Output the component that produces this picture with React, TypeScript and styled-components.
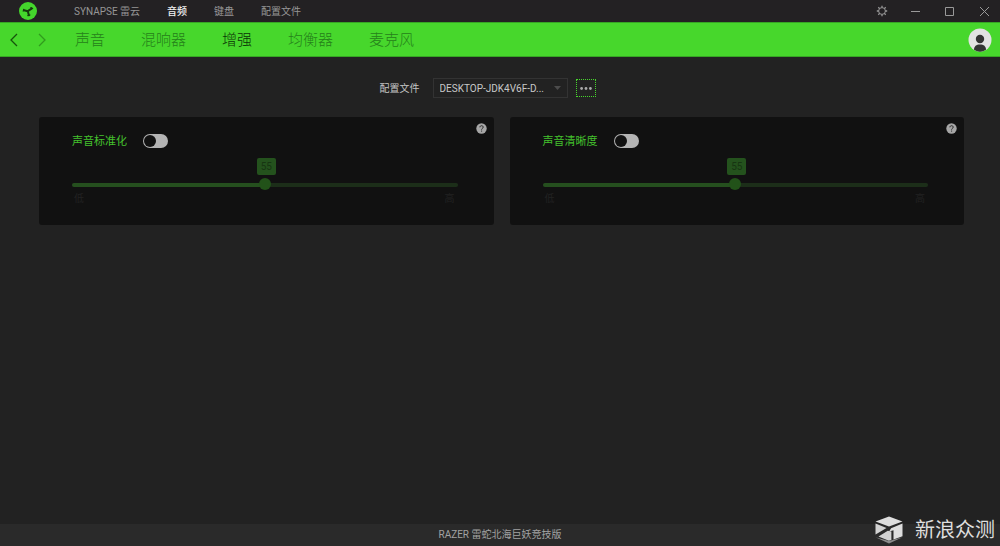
import React, { useState } from 'react';
import styled, { createGlobalStyle } from 'styled-components';

const Global = createGlobalStyle`
  * { box-sizing: border-box; }
  body {
    margin: 0;
    background: #222222;
    color: #b8b8b8;
    font-family: Roboto, "Noto Sans CJK SC", sans-serif;
    font-size: 10px;
    line-height: 16px;
  }
  button, select, input { font: inherit; color: inherit; margin: 0; }
  button { padding: 0; border: 0; background: none; cursor: pointer; }
  svg { display: block; }
`;

const Page = styled.div`
  min-height: 100vh;
  display: flex;
  flex-direction: column;
`;

const TitleBar = styled.header`
  display: flex;
  align-items: center;
  height: 22px;
  padding: 0 10px 0 19px;
  background: #232123;
`;

const Brand = styled.div`
  width: 55px;
`;

const ModuleNav = styled.nav`
  display: flex;
  gap: 27px;
  flex: 1;
  padding-top: 2px;
`;

const ModuleLink = styled.a<{ $active?: boolean }>`
  color: ${(p) => (p.$active ? '#f0f0f0' : '#969696')};
  font-weight: ${(p) => (p.$active ? 500 : 400)};
  text-decoration: none;
`;

const WindowControls = styled.div`
  display: flex;
  gap: 22px;
  color: #999999;
`;

const IconButton = styled.button`
  display: flex;
  align-items: center;
  justify-content: center;
  min-width: 12px;
  height: 16px;
`;

const TabBar = styled.div`
  display: flex;
  align-items: center;
  height: 35px;
  padding: 0 8px;
  background: #47d72c;
  border-top: 1px solid #36a624;
  border-bottom: 1px solid #36a624;
  color: #16530c;
`;

const History = styled.div`
  display: flex;
  gap: 16px;
  width: 67px;
`;

const Tabs = styled.nav`
  display: flex;
  gap: 36px;
  flex: 1;
`;

const Tab = styled.a<{ $active?: boolean }>`
  font-size: 15px;
  line-height: 24px;
  font-weight: 300;
  color: ${(p) => (p.$active ? '#0b3306' : '#25811a')};
  text-decoration: none;
`;

const Content = styled.main`
  flex: 1;
  padding: 21px 36px 0 39px;
`;

const ProfileRow = styled.div`
  display: flex;
  align-items: center;
  justify-content: center;
  height: 20px;
  margin-bottom: 19px;
  padding-right: 28px;
`;

const ProfileLabel = styled.label`
  margin-right: 13px;
  padding-top: 2px;
  color: #c4c4c4;
`;

const SelectBox = styled.div`
  display: grid;
  align-items: center;
  width: 135px;
  margin-right: 8px;
  border: 1px solid #333333;

  > * { grid-area: 1 / 1; }
  > svg { justify-self: end; margin-right: 6px; pointer-events: none; }
`;

const Select = styled.select`
  appearance: none;
  width: 100%;
  height: 18px;
  padding: 2px 20px 0 6px;
  border: 0;
  outline: 0;
  background: #222222;
  color: #c8c8c8;
`;

const MoreButton = styled.button`
  display: flex;
  align-items: center;
  justify-content: center;
  width: 20px;
  height: 18px;
  border: 1px dotted #47d72c;
  outline: 0;
`;

const Cards = styled.div`
  display: grid;
  grid-template-columns: 1fr 1fr;
  gap: 16px;
`;

const Card = styled.section`
  position: relative;
  height: 108px;
  padding: 16px 36px 0 33px;
  background: #111111;
  border-radius: 3px;
`;

const HelpButton = styled.button`
  position: absolute;
  top: 6px;
  right: 7px;
`;

const CardHeader = styled.div`
  display: flex;
  align-items: center;
  gap: 14px;
  height: 16px;
`;

const CardTitle = styled.label`
  width: 57px;
  padding-top: 2px;
  font-size: 11px;
  color: #44c22d;
  white-space: nowrap;
`;

const Switch = styled.input`
  appearance: none;
  display: flex;
  width: 25px;
  height: 14px;
  padding: 1px;
  border-radius: 7px;
  background: #b4b4b4;
  cursor: pointer;

  &::before {
    content: "";
    width: 12px;
    height: 12px;
    border-radius: 50%;
    background: #111111;
  }
  &:checked { background: #44d62c; justify-content: flex-end; }
`;

const SliderBlock = styled.div`
  position: relative;
  padding-top: 29px;
`;

const Bubble = styled.output`
  position: absolute;
  top: 9px;
  width: 19px;
  margin-left: -8px;
  border-radius: 2px;
  background: #24521d;
  color: #173512;
  line-height: 17px;
  text-align: center;
`;

const Range = styled.input`
  appearance: none;
  display: block;
  width: 100%;
  height: 14px;
  background: none;

  &::-webkit-slider-runnable-track {
    height: 4px;
    border-radius: 2px;
    background: linear-gradient(to right, #254f1e var(--fill), #1c2e19 var(--fill));
  }
  &::-webkit-slider-thumb {
    appearance: none;
    width: 12px;
    height: 12px;
    margin-top: -5px;
    border-radius: 50%;
    background: #225219;
  }
`;

const Ends = styled.div`
  display: flex;
  justify-content: space-between;
  padding: 0 3px 0 2px;
  line-height: 14px;
  color: #222222;
`;

const Footer = styled.footer`
  height: 22px;
  line-height: 22px;
  text-align: center;
  background: #2a2a2a;
  color: #a2a2a2;
`;

const Watermark = styled.div`
  position: absolute;
  right: 5px;
  bottom: 2px;
  display: flex;
  align-items: center;
  gap: 12px;
  color: #dedede;
  font-size: 20px;
  line-height: 28px;
`;

const Logo = () => (
  <svg width="18" height="18" viewBox="0 0 18 18" aria-hidden="true">
    <circle cx="9" cy="9" r="9" fill="#44d62c" />
    <g stroke="#16380f" fill="none" strokeLinecap="round">
      <path d="M8.8 9.2 5 8.2M8.8 9.2 12.6 6.6M8.8 9.2l1.1 4" strokeWidth="2" />
      <path d="M4.2 9.2 4.8 7.2M11.8 5.6l1.9 1M8.8 13.6l2.2-.6" strokeWidth="1.1" />
    </g>
  </svg>
);

const Gear = () => (
  <svg width="12" height="12" viewBox="0 0 12 12" fill="none" stroke="currentColor" aria-hidden="true">
    <circle cx="6" cy="6" r="3.4" />
    <path
      d="M6 .8v1.8M6 9.4v1.8M.8 6h1.8M9.4 6h1.8M2.3 2.3l1.3 1.3M8.4 8.4l1.3 1.3M2.3 9.7l1.3-1.3M8.4 3.6l1.3-1.3"
      strokeWidth="1.3"
    />
  </svg>
);

const Chevron = ({ back }: { back?: boolean }) => (
  <svg width="12" height="14" viewBox="0 0 12 14" fill="none" stroke="currentColor" strokeWidth="1.3" opacity={back ? 1 : 0.45} aria-hidden="true">
    <path d={back ? 'M9 1 3 7l6 6' : 'M3 1l6 6-6 6'} />
  </svg>
);

const Avatar = () => (
  <svg width="24" height="24" viewBox="0 0 24 24" aria-hidden="true">
    <circle cx="12" cy="12" r="11.5" fill="#e2e2e2" />
    <circle cx="12" cy="11" r="4.2" fill="#333333" />
    <path d="M6 21.8c0-3.4 2.2-5.3 6-5.3s6 1.9 6 5.3a11.5 11.5 0 0 1-12 0z" fill="#333333" />
  </svg>
);

const Cube = () => (
  <svg width="28" height="28" viewBox="0 0 28 28" aria-hidden="true">
    <path d="M.5 5.4 14 .6l13.5 4.8L14 10.4z" fill="#dedede" />
    <path d="M.5 7.6l11 4.4L.5 18.4z" fill="#d2d2d2" />
    <path d="M27.5 7.6v12.6l-9 3.4v-9.4l-4.4 1.2 2-3.2z" fill="#dedede" />
    <path d="M3.5 20.6 12.8 14.8l3.6.6v8.6l-2.6.8z" fill="#d2d2d2" />
    <path d="M.5 21.2 14 27.4l13.5-6.2L14 25z" fill="#8c8c8c" />
  </svg>
);

interface LevelCardProps {
  id: string;
  title: string;
}

const MIN = 10;
const MAX = 100;

function LevelCard({ id, title }: LevelCardProps) {
  const [enabled, setEnabled] = useState(false);
  const [level, setLevel] = useState(55);
  const fill = `${((level - MIN) / (MAX - MIN)) * 100}%`;

  return (
    <Card>
      <HelpButton type="button" aria-label="帮助">
        <svg width="11" height="11" viewBox="0 0 11 11" aria-hidden="true">
          <circle cx="5.5" cy="5.5" r="5.2" fill="#a6a6a6" />
          <path d="M3.9 4.3c0-2.1 3.3-2.1 3.3-.1 0 1.2-1.6 1.2-1.6 2.4M5.6 7.6v1" fill="none" stroke="#222222" />
        </svg>
      </HelpButton>
      <CardHeader>
        <CardTitle htmlFor={`${id}-switch`}>{title}</CardTitle>
        <Switch
          id={`${id}-switch`}
          type="checkbox"
          role="switch"
          checked={enabled}
          onChange={(e) => setEnabled(e.target.checked)}
        />
      </CardHeader>
      <SliderBlock>
        <Bubble htmlFor={`${id}-level`} style={{ left: fill }}>{level}</Bubble>
        <Range
          id={`${id}-level`}
          type="range"
          aria-label={title}
          min={MIN}
          max={MAX}
          value={level}
          disabled={!enabled}
          onChange={(e) => setLevel(Number(e.target.value))}
          style={{ '--fill': fill } as React.CSSProperties}
        />
        <Ends>
          <span>低</span>
          <span>高</span>
        </Ends>
      </SliderBlock>
    </Card>
  );
}

export default function App() {
  return (
    <Page>
      <Global />
      <TitleBar>
        <Brand><Logo /></Brand>
        <ModuleNav>
          <ModuleLink href="#synapse">SYNAPSE 雷云</ModuleLink>
          <ModuleLink href="#audio" $active>音频</ModuleLink>
          <ModuleLink href="#keyboard">键盘</ModuleLink>
          <ModuleLink href="#profiles">配置文件</ModuleLink>
        </ModuleNav>
        <WindowControls>
          <IconButton type="button" aria-label="设置"><Gear /></IconButton>
          <IconButton type="button" aria-label="最小化">
            <svg width="12" height="12" viewBox="0 0 12 12" stroke="currentColor" aria-hidden="true"><path d="M1 6.5h9" /></svg>
          </IconButton>
          <IconButton type="button" aria-label="最大化">
            <svg width="12" height="12" viewBox="0 0 12 12" fill="none" stroke="currentColor" aria-hidden="true"><path d="M1.5 2.5h8v8h-8z" /></svg>
          </IconButton>
          <IconButton type="button" aria-label="关闭">
            <svg width="12" height="12" viewBox="0 0 12 12" stroke="currentColor" aria-hidden="true"><path d="m2 2 9 9M11 2l-9 9" /></svg>
          </IconButton>
        </WindowControls>
      </TitleBar>
      <TabBar>
        <History>
          <IconButton type="button" aria-label="后退"><Chevron back /></IconButton>
          <IconButton type="button" aria-label="前进"><Chevron /></IconButton>
        </History>
        <Tabs>
          <Tab href="#sound">声音</Tab>
          <Tab href="#mixer">混响器</Tab>
          <Tab href="#enhance" $active>增强</Tab>
          <Tab href="#equalizer">均衡器</Tab>
          <Tab href="#mic">麦克风</Tab>
        </Tabs>
        <IconButton type="button" aria-label="账户"><Avatar /></IconButton>
      </TabBar>
      <Content>
        <ProfileRow>
          <ProfileLabel htmlFor="profile">配置文件</ProfileLabel>
          <SelectBox>
            <Select id="profile">
              <option>DESKTOP-JDK4V6F-D...</option>
            </Select>
            <svg width="7" height="4" viewBox="0 0 7 4" aria-hidden="true"><path d="M0 0h7L3.5 4z" fill="#4c4c4c" /></svg>
          </SelectBox>
          <MoreButton type="button" aria-label="更多">
            <svg width="12" height="3" viewBox="0 0 12 3" fill="#aaaaaa" aria-hidden="true">
              <circle cx="1.6" cy="1.5" r="1.4" />
              <circle cx="6" cy="1.5" r="1.4" />
              <circle cx="10.4" cy="1.5" r="1.4" />
            </svg>
          </MoreButton>
        </ProfileRow>
        <Cards>
          <LevelCard id="normalization" title="声音标准化" />
          <LevelCard id="clarity" title="声音清晰度" />
        </Cards>
      </Content>
      <Footer>RAZER 雷蛇北海巨妖竞技版</Footer>
      <Watermark>
        <Cube />
        <span>新浪众测</span>
      </Watermark>
    </Page>
  );
}
